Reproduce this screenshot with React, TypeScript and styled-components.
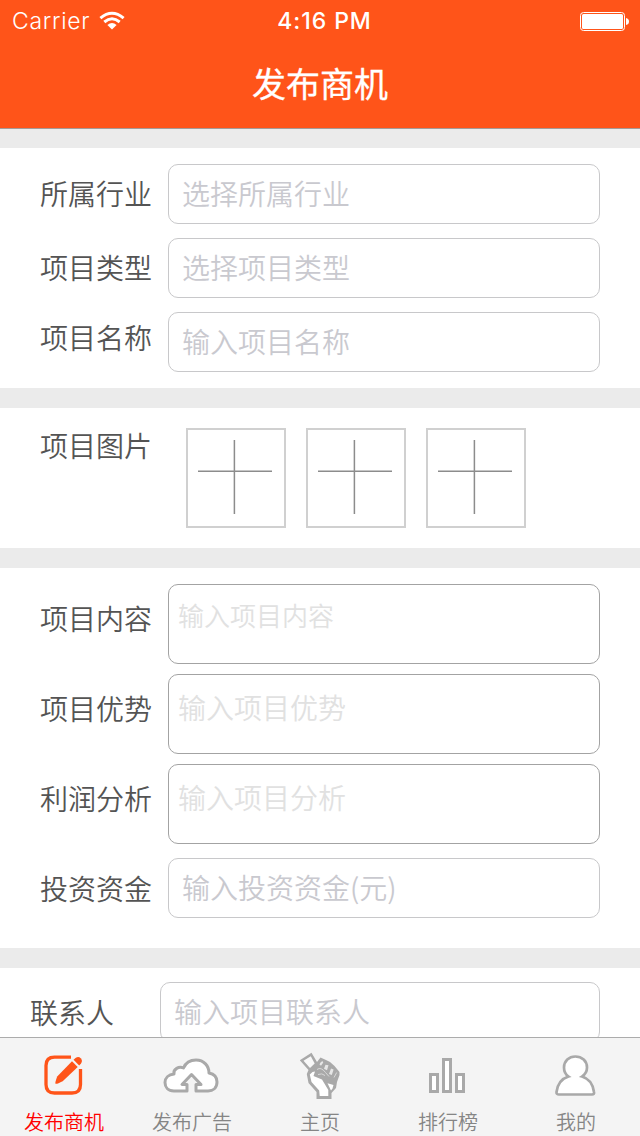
import React from "react";
import styled, { createGlobalStyle } from "styled-components";

const GlobalStyle = createGlobalStyle`
  * { box-sizing: border-box; }
  body { margin: 0; background: #fff; }
`;

const cjk = '"Noto Sans CJK SC", sans-serif';

const Screen = styled.div`
  width: 640px;
  height: 1136px;
  display: flex;
  flex-direction: column;
  overflow: hidden;
  background: #ebebeb;
  font-family: ${cjk};
`;

const Header = styled.header`
  flex: none;
  height: 129px;
  background: #ff5419;
  border-bottom: 1px solid #a59a96;
  color: #fff;
`;

const StatusBar = styled.div`
  height: 41px;
  display: grid;
  grid-template-columns: 1fr auto 1fr;
  align-items: center;
  padding: 0 11px 0 12px;
  font-family: Inter, sans-serif;
  font-size: 23px;
  line-height: 41px;
`;

const Carrier = styled.div`
  display: flex;
  align-items: center;
  gap: 9px;
  font-weight: 300;
  letter-spacing: 0.7px;
`;

const CarrierName = styled.span`
  padding-top: 1px;
`;

const Clock = styled.div`
  padding: 1px 0 0 8px;
  font-weight: 500;
  letter-spacing: 0.95px;
`;

const BatterySlot = styled.div`
  display: flex;
  justify-content: flex-end;
`;

const Title = styled.h1`
  margin: 0;
  height: 87px;
  line-height: 83px;
  text-align: center;
  font-size: 34px;
  font-weight: 400;
  -webkit-text-stroke: 0.3px #fff;
`;

const Form = styled.main`
  flex: 1;
  min-height: 0;
  overflow: hidden;
  padding-top: 19px;
  display: flex;
  flex-direction: column;
  gap: 20px;
`;

const Section = styled.section<{ $h: number; $top?: number; $left?: number }>`
  flex: none;
  height: ${(p) => p.$h}px;
  padding: ${(p) => p.$top ?? 16}px 40px 0 ${(p) => p.$left ?? 40}px;
  background: #fff;
  display: flex;
  flex-direction: column;
`;

const Row = styled.div<{ $gap?: number; $labelWidth?: number }>`
  display: grid;
  grid-template-columns: ${(p) => p.$labelWidth ?? 128}px 1fr;
  align-items: start;
  margin-bottom: ${(p) => p.$gap ?? 14}px;
`;

const Label = styled.label<{ $line?: number }>`
  font-size: 28px;
  font-weight: 350;
  line-height: ${(p) => p.$line ?? 58}px;
  color: #545454;
  white-space: nowrap;
`;

const Field = styled.div`
  height: 60px;
  padding-left: 13px;
  border: 1px solid #c8c8ca;
  border-radius: 10px;
  font-size: 28px;
  font-weight: 350;
  line-height: 56px;
  color: #c9c9cf;
`;

const Area = styled.div<{ $size?: number; $line?: number }>`
  height: 80px;
  padding-left: 9px;
  border: 1px solid #a3a3a3;
  border-radius: 10px;
  font-size: ${(p) => p.$size ?? 28}px;
  font-weight: 350;
  line-height: ${(p) => p.$line ?? 64}px;
  color: #e1e1e1;
`;

const Photos = styled.div`
  display: flex;
  gap: 20px;
  padding-left: 18px;
`;

const PhotoBox = styled.div`
  width: 100px;
  height: 100px;
  border: 2px solid #d0d0d0;
`;

const TabBar = styled.nav`
  flex: none;
  height: 99px;
  display: grid;
  grid-template-columns: repeat(5, 1fr);
  background: #f4f4f4;
  border-top: 1px solid #acacac;
`;

const Tab = styled.div<{ $active?: boolean }>`
  display: flex;
  flex-direction: column;
  align-items: center;
  padding-top: 8px;
  font-size: 20px;
  font-weight: 350;
  line-height: 28px;
  color: ${(p) => (p.$active ? "#ff0000" : "#858585")};
`;

const TabIcon = styled.svg`
  display: block;
  width: 60px;
  height: 62px;
`;

const Wifi = () => (
  <svg width="26" height="20" viewBox="0 0 26 20" fill="none" stroke="#fff" strokeWidth="3">
    <path d="M1.4 7.1Q13 -2.7 24.6 7.1" />
    <path d="M5.3 11Q13 4.6 20.7 11" />
    <path d="M8.4 13.9Q13 10.2 17.6 13.9L13 18.5Z" fill="#fff" stroke="none" />
  </svg>
);

const Battery = () => (
  <svg width="49" height="21" viewBox="0 0 49 21">
    <rect x="0.5" y="1.5" width="44" height="18" rx="3" fill="none" stroke="#fff" />
    <rect x="2" y="3" width="41" height="15" rx="1.500" fill="#fff" />
    <path d="M46 7Q49 7.500 49 10.500T46 14Z" fill="#fff" />
  </svg>
);

const Plus = () => (
  <svg width="96" height="96" viewBox="0 0 96 96" stroke="#8c8c8c" strokeWidth="1.5">
    <path d="M10 41.3H84M46.4 10V84" />
  </svg>
);

const EditIcon = () => (
  <TabIcon viewBox="34 1046 60 62">
    <path
      d="M71 1057.200H54.500Q46 1057.200 46 1065.500V1084.500Q46 1093 54.500 1093H72Q80.500 1093 80.500 1084.500V1069"
      fill="none" stroke="#ff5419" strokeWidth="3.300"
    />
    <path d="M55.500 1083.700Q54.800 1083 57.200 1076.500L72 1061.300L77.700 1067L62.700 1081.300Q56.500 1084.500 55.500 1083.700Z" fill="#ff5419" />
    <path d="M73.500 1059.800L75.500 1058Q78.500 1056 80.700 1058.200Q83 1060.500 81 1063.500L79.200 1065.500Z" fill="#ff5419" />
  </TabIcon>
);

const CloudIcon = () => (
  <TabIcon viewBox="162 1046 60 62">
    <path
      d="M187 1091H174C168 1091 165 1087 165 1082.500C165 1078 168.500 1074.500 174 1074C173 1069 179 1066 183.500 1068C186 1062 191 1060 196 1060C204 1060 209 1066 209 1073C214 1074 217 1077 217 1082C217 1088 213 1091 208 1091H196V1084.500H201L191.500 1074.500L182 1084.500H187Z"
      fill="#fff" stroke="#a9a9a9" strokeWidth="3" strokeLinejoin="round"
    />
  </TabIcon>
);

const HandIcon = () => (
  <TabIcon viewBox="290 1046 60 62">
    <path
      d="M308.500 1070L299.800 1060.300L311.500 1052.800L317 1062L320.500 1057.500L326 1060L330 1062L334.500 1066L339.500 1072V1075L337 1082L336 1088L331.500 1093V1099H316.500V1092L308.500 1083L306.800 1074Z"
      fill="#a9a9a9"
    />
    <path d="M303.500 1060.700L310.800 1056.300L314.700 1063.500L310 1068Z" fill="#f8f8f8" />
    <path
      d="M309.800 1074.500L312.500 1072L315 1071.500L313.500 1076L322 1079.500L328.300 1090V1096H319.700L319.200 1090.500L311.500 1082Z"
      fill="#fff"
    />
    <path d="M327.500 1083.300L333.500 1085L332.500 1088.500L331 1090.500Z" fill="#fff" />
    <path
      d="M320.300 1062.700L322.300 1061L323.300 1062.500L321 1065.700L319.500 1064.500ZM325.500 1064.700L328.500 1065.200L327 1070.200L324 1068.700ZM331 1068.500L333.600 1069.500L331.800 1075L329 1074Z"
      fill="#e6e6e6"
    />
    <path d="M317 1069.500Q321 1066.500 325.500 1072.500L329 1076.500M318 1074.500Q322 1072.800 325 1075.500M336.700 1072.500L334 1077.500" fill="none" stroke="#d8d8d8" strokeWidth="1" />
  </TabIcon>
);

const ChartIcon = () => (
  <TabIcon viewBox="418 1046 60 62" fill="#fff" stroke="#a9a9a9" strokeWidth="3">
    <path d="M430.500 1074.500H437.500V1091.500H430.500ZM443.500 1059.500H450.500V1091.500H443.500ZM456.500 1074.500H463.500V1091.500H456.500Z" />
  </TabIcon>
);

const UserIcon = () => (
  <TabIcon viewBox="546 1046 60 62">
    <path
      d="M568.500 1076.500C564 1073.500 564 1069.500 564 1067.500C564 1061 569 1056.500 575.300 1056.500C582 1056.500 587 1061 587 1067.500C587 1071.500 585 1074.500 582 1076.500C589 1078.500 593 1085 594 1092Q594.500 1094.500 592 1094.500H559Q556.300 1094.500 556.500 1092C557.500 1084.500 562 1078.500 568.500 1076.500Z"
      fill="#fff" stroke="#a9a9a9" strokeWidth="2.700"
    />
  </TabIcon>
);

export default function App() {
  return (
    <Screen>
      <GlobalStyle />
      <Header>
        <StatusBar>
          <Carrier><CarrierName>Carrier</CarrierName><Wifi /></Carrier>
          <Clock>4:16 PM</Clock>
          <BatterySlot><Battery /></BatterySlot>
        </StatusBar>
        <Title>发布商机</Title>
      </Header>
      <Form>
        <Section $h={240}>
          <Row><Label>所属行业</Label><Field>选择所属行业</Field></Row>
          <Row><Label>项目类型</Label><Field>选择项目类型</Field></Row>
          <Row><Label $line={50}>项目名称</Label><Field>输入项目名称</Field></Row>
        </Section>
        <Section $h={140} $top={20}>
          <Row>
            <Label $line={34}>项目图片</Label>
            <Photos>
              <PhotoBox><Plus /></PhotoBox>
              <PhotoBox><Plus /></PhotoBox>
              <PhotoBox><Plus /></PhotoBox>
            </Photos>
          </Row>
        </Section>
        <Section $h={380}>
          <Row $gap={10}><Label $line={68}>项目内容</Label><Area $size={26} $line={60}>输入项目内容</Area></Row>
          <Row $gap={10}><Label $line={68}>项目优势</Label><Area>输入项目优势</Area></Row>
          <Row><Label $line={68}>利润分析</Label><Area>输入项目分析</Area></Row>
          <Row><Label $line={60}>投资资金</Label><Field>输入投资资金(元)</Field></Row>
        </Section>
        <Section $h={100} $top={14} $left={30}>
          <Row $labelWidth={130}><Label $line={60}>联系人</Label><Field>输入项目联系人</Field></Row>
        </Section>
      </Form>
      <TabBar>
        <Tab $active><EditIcon />发布商机</Tab>
        <Tab><CloudIcon />发布广告</Tab>
        <Tab><HandIcon />主页</Tab>
        <Tab><ChartIcon />排行榜</Tab>
        <Tab><UserIcon />我的</Tab>
      </TabBar>
    </Screen>
  );
}
